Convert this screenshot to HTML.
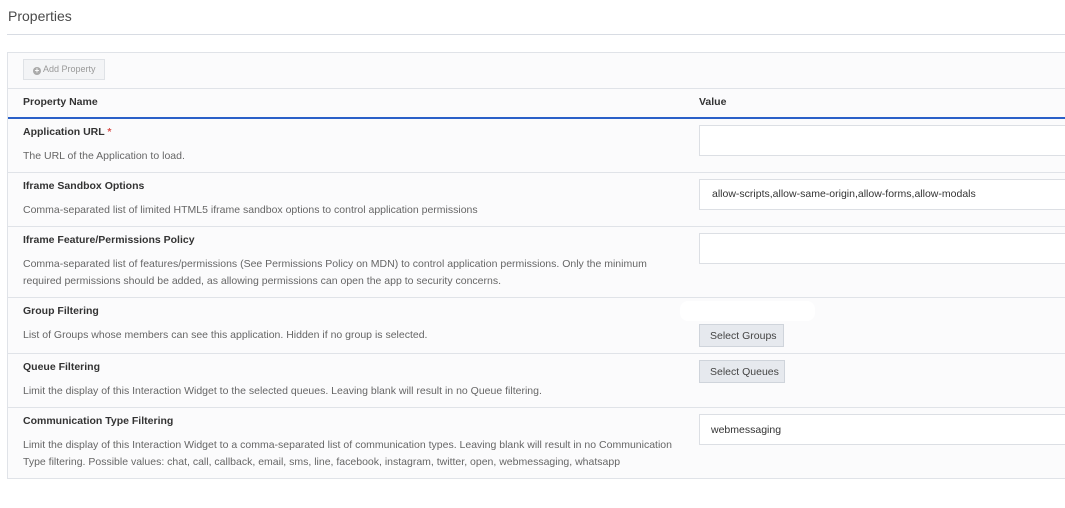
<!DOCTYPE html>
<html><head><style>
*{margin:0;padding:0;box-sizing:border-box}
body{width:1065px;height:508px;background:#fff;font-family:"Liberation Sans",sans-serif;position:relative;overflow:hidden;color:#444}
.a{position:absolute;white-space:nowrap}
.t{position:absolute;left:8px;top:8px;font-size:14px;color:#4a4a4a}
.hr{position:absolute;left:7px;right:0;top:34px;height:1px;background:#d8dce3}
.box{position:absolute;left:7px;top:52px;width:1070px;height:427px;border:1px solid #e0e3e8;background:#fbfbfc}
.line{position:absolute;left:8px;width:1060px;height:1px;background:#e0e3e8}
.lb{font-size:10.5px;font-weight:bold;color:#333;left:23px}
.ds{font-size:10.5px;color:#666;left:23px;line-height:17px}
.in{position:absolute;left:699px;width:380px;height:31px;border:1px solid #dcdfe4;background:#fff;font-size:10.5px;color:#333;padding:8px 0 0 11px}
.bt{position:absolute;left:699px;height:23px;border:1px solid #cfd4db;background:#e6e9ee;font-size:10.5px;color:#444;padding:5px 0 0 10px}
</style></head><body>
<div class="t">Properties</div>
<div class="hr"></div>
<div class="box"></div>
<div class="a" style="left:23px;top:59px;width:82px;height:21px;border:1px solid #dfe2e6;background:#f3f4f6;font-size:9px;color:#999;padding:4px 0 0 9px"><span style="display:inline-block;width:8px;height:8px;border-radius:50%;background:#aaa;vertical-align:-1px;color:#fff;font-size:8px;line-height:8px;text-align:center;font-weight:bold">+</span> Add Property</div>
<div class="line" style="top:88px"></div>
<div class="a lb" style="top:96px">Property Name</div>
<div class="a lb" style="top:96px;left:699px">Value</div>
<div class="a" style="left:8px;top:117px;width:1060px;height:2px;background:#2a60c8"></div>

<div class="a lb" style="top:126px">Application URL <span style="color:#d9534f">*</span></div>
<div class="a ds" style="top:148px">The URL of the Application to load.</div>
<div class="in" style="top:125px"></div>
<div class="line" style="top:172px"></div>

<div class="a lb" style="top:180px">Iframe Sandbox Options</div>
<div class="a ds" style="top:202px">Comma-separated list of limited HTML5 iframe sandbox options to control application permissions</div>
<div class="in" style="top:179px;padding-left:12px">allow-scripts,allow-same-origin,allow-forms,allow-modals</div>
<div class="line" style="top:226px"></div>

<div class="a lb" style="top:234px">Iframe Feature/Permissions Policy</div>
<div class="a ds" style="top:256px">Comma-separated list of features/permissions (See Permissions Policy on MDN) to control application permissions. Only the minimum<br>required permissions should be added, as allowing permissions can open the app to security concerns.</div>
<div class="in" style="top:233px"></div>
<div class="line" style="top:297px"></div>

<div class="a lb" style="top:305px">Group Filtering</div>
<div class="a ds" style="top:327px">List of Groups whose members can see this application. Hidden if no group is selected.</div>
<div class="a" style="left:680px;top:301px;width:135px;height:20px;background:#fff;border-radius:8px"></div>
<div class="bt" style="top:324px;width:85px">Select Groups</div>
<div class="line" style="top:353px"></div>

<div class="a lb" style="top:361px">Queue Filtering</div>
<div class="a ds" style="top:383px">Limit the display of this Interaction Widget to the selected queues. Leaving blank will result in no Queue filtering.</div>
<div class="bt" style="top:360px;width:86px">Select Queues</div>
<div class="line" style="top:407px"></div>

<div class="a lb" style="top:415px">Communication Type Filtering</div>
<div class="a ds" style="top:437px">Limit the display of this Interaction Widget to a comma-separated list of communication types. Leaving blank will result in no Communication<br>Type filtering. Possible values: chat, call, callback, email, sms, line, facebook, instagram, twitter, open, webmessaging, whatsapp</div>
<div class="in" style="top:414px;padding-top:9px">webmessaging</div>
</body></html>
